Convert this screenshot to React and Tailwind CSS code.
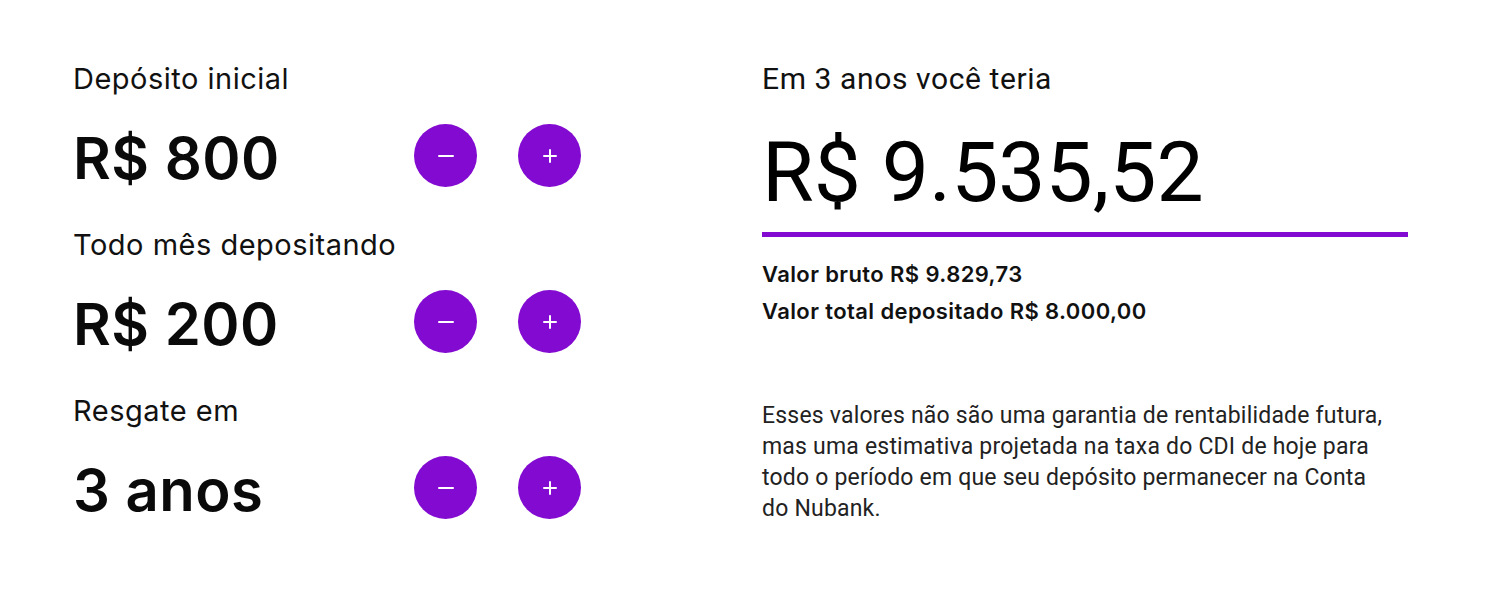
import React from "react";

const purple = "bg-[#820ad1]";

function RoundButton({ children, label }) {
  return (
    <button
      aria-label={label}
      className={`${purple} w-[63px] h-[63px] rounded-full flex items-center justify-center text-white`}
    >
      {children}
    </button>
  );
}

function Minus() {
  return (
    <svg width="20" height="20" viewBox="0 0 20 20">
      <path d="M3 10h14" stroke="white" strokeWidth="2" strokeLinecap="round" />
    </svg>
  );
}

function Plus() {
  return (
    <svg width="18" height="18" viewBox="0 0 18 18">
      <path d="M9 3v12M3 9h12" stroke="white" strokeWidth="2" strokeLinecap="round" />
    </svg>
  );
}

function Field({ label, value, first }) {
  return (
    <div className={first ? "" : "mt-[42px]"}>
      <div className="text-[29px] leading-[32px] tracking-[0.5px] text-[#111]">{label}</div>
      <div className="mt-[29px] flex items-center h-[63px]">
        <div className="w-[341px] pt-[4px] text-[58px] leading-none font-semibold tracking-[0.5px] text-[#0a0a0a]">
          {value}
        </div>
        <div className="flex gap-[41px]">
          <RoundButton label="diminuir">
            <Minus />
          </RoundButton>
          <RoundButton label="aumentar">
            <Plus />
          </RoundButton>
        </div>
      </div>
    </div>
  );
}

export default function App() {
  return (
    <div className="w-[1500px] h-[603px] bg-white flex pl-[73px] pt-[63px]">
      <div className="w-[689px] font-['Inter',sans-serif]">
        <Field first label="Depósito inicial" value="R$ 800" />
        <Field label="Todo mês depositando" value="R$ 200" />
        <Field label="Resgate em" value="3 anos" />
      </div>
      <div className="w-[646px] font-['Roboto',sans-serif] text-black">
        <div className="text-[30px] leading-[32px] tracking-[0.6px] text-[#111]">Em 3 anos você teria</div>
        <div className="mt-[36px] text-[84px] leading-[84px]">R$ 9.535,52</div>
        <div className={`mt-[17px] h-[5px] ${purple}`} />
        <div className="mt-[19px] font-['Inter',sans-serif] font-semibold text-[22px] leading-[37px] tracking-[0.4px] text-[#111]">
          <div>Valor bruto R$ 9.829,73</div>
          <div>Valor total depositado R$ 8.000,00</div>
        </div>
        <p className="mt-[70px] text-[23px] leading-[31px] tracking-[0.2px] text-[#222] w-[625px]">
          Esses valores não são uma garantia de rentabilidade futura, mas uma
          estimativa projetada na taxa do CDI de hoje para todo o período em que
          seu depósito permanecer na Conta do Nubank.
        </p>
      </div>
    </div>
  );
}
